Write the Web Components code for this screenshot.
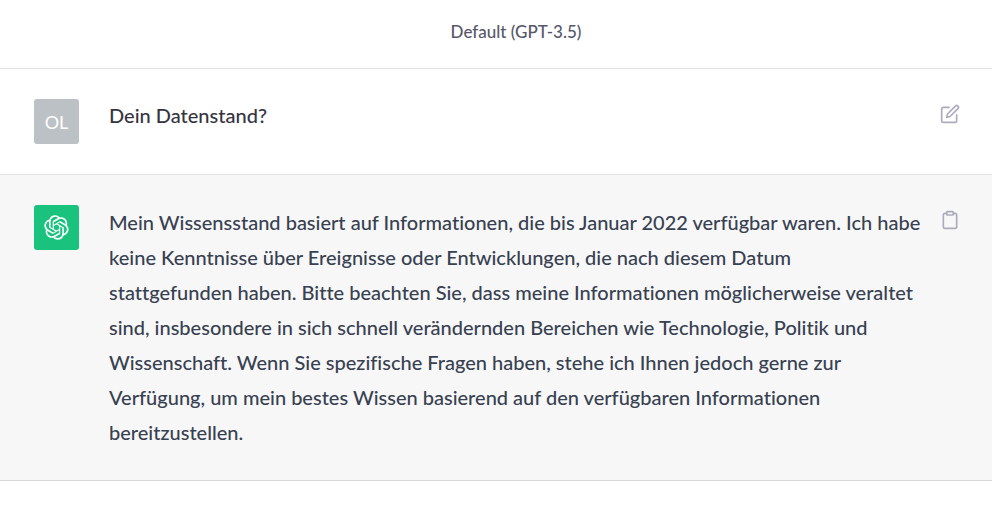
<!DOCTYPE html>
<html lang="de">
<head>
<meta charset="utf-8">
<meta name="viewport" content="width=device-width, initial-scale=1">
<title>Default (GPT-3.5)</title>
<style>
body{margin:0;background:#fff;font-family:Lato,Roboto,sans-serif;font-variant-ligatures:none}
</style>
</head>
<body>
<chat-thread>
  <thread-header>Default (GPT-3.5)</thread-header>
  <chat-message role="article" kind="user">
    <user-avatar slot="avatar">OL</user-avatar>
    Dein Datenstand?
    <icon-action slot="action" icon="edit" label="Bearbeiten"></icon-action>
  </chat-message>
  <chat-message role="article" kind="assistant">
    <user-avatar slot="avatar" bot></user-avatar>
    Mein Wissensstand basiert auf Informationen, die bis Januar 2022 verfügbar waren. Ich habe keine Kenntnisse über Ereignisse oder Entwicklungen, die nach diesem Datum<br> stattgefunden haben. Bitte beachten Sie, dass meine Informationen möglicherweise veraltet sind, insbesondere in sich schnell verändernden Bereichen wie Technologie, Politik und Wissenschaft. Wenn Sie spezifische Fragen haben, stehe ich Ihnen jedoch gerne zur Verfügung, um mein bestes Wissen basierend auf den verfügbaren Informationen bereitzustellen.
    <icon-action slot="action" icon="clipboard" label="Kopieren"></icon-action>
  </chat-message>
</chat-thread>
<script>
const define = (name, html, setup) => customElements.define(name, class extends HTMLElement {
  constructor() {
    super();
    this.attachShadow({ mode: 'open' }).innerHTML = html;
  }
  connectedCallback() { if (setup) setup(this, this.shadowRoot); }
});

define('chat-thread', `<style>:host{display:flex;flex-direction:column}</style><slot></slot>`);

define('thread-header', `<style>
:host{display:block;border-bottom:1px solid #e2e2e2;padding:20px 0 24px 40px;text-align:center;color:#565869}
h1{margin:0;font-size:17px;line-height:24px;font-weight:500}
</style><h1><slot></slot></h1>`);

define('chat-message', `<style>
:host{display:grid;grid-template-columns:45px minmax(0,1fr) 20px;column-gap:30px;padding:30px 32px 30px 34px;border-bottom:1px solid #e2e2e2;color:#343541}
:host([kind=assistant]){background:#f7f7f7;color:#374151;border-color:#d9d9d9}
p{margin:0 -20px 0 0;font-size:20px;line-height:32px;font-weight:500}
:host([kind=assistant]) p{line-height:35px}
</style><slot name="avatar"></slot><p><slot></slot></p><slot name="action"></slot>`);

define('user-avatar', `<style>
:host{display:flex;align-items:center;justify-content:center;width:45px;height:45px;border-radius:3px;background:#bcc1c5;color:#fff;font-size:18px;line-height:24px;font-weight:400}
:host([bot]){background:#19c37d}
svg{display:none;width:25px;height:25px;fill:#fff}
:host([bot]) svg{display:block}
</style><slot></slot><svg viewBox="0 0 41 41" aria-hidden="true"><path d="M37.532 16.87a9.963 9.963 0 0 0-.856-8.184 10.078 10.078 0 0 0-10.855-4.835A9.964 9.964 0 0 0 18.306.5a10.079 10.079 0 0 0-9.614 6.977 9.967 9.967 0 0 0-6.664 4.834 10.08 10.08 0 0 0 1.24 11.817 9.965 9.965 0 0 0 .856 8.185 10.079 10.079 0 0 0 10.855 4.835 9.965 9.965 0 0 0 7.516 3.35 10.078 10.078 0 0 0 9.617-6.981 9.967 9.967 0 0 0 6.663-4.834 10.079 10.079 0 0 0-1.243-11.813zM22.498 37.886a7.474 7.474 0 0 1-4.799-1.735c.061-.033.168-.091.237-.134l7.964-4.6a1.294 1.294 0 0 0 .655-1.134V19.054l3.366 1.944a.12.12 0 0 1 .066.092v9.299a7.505 7.505 0 0 1-7.49 7.496zM6.392 31.006a7.471 7.471 0 0 1-.894-5.023c.06.036.162.099.237.141l7.964 4.6a1.297 1.297 0 0 0 1.308 0l9.724-5.614v3.888a.12.12 0 0 1-.048.103l-8.051 4.649a7.504 7.504 0 0 1-10.24-2.744zM4.297 13.62A7.469 7.469 0 0 1 8.2 10.333c0 .068-.004.19-.004.274v9.201a1.294 1.294 0 0 0 .654 1.132l9.723 5.614-3.366 1.944a.12.12 0 0 1-.114.01L7.04 23.856a7.504 7.504 0 0 1-2.743-10.237zm27.658 6.437l-9.724-5.615 3.367-1.943a.121.121 0 0 1 .113-.01l8.052 4.648a7.498 7.498 0 0 1-1.158 13.528v-9.476a1.293 1.293 0 0 0-.65-1.132zm3.35-5.043c-.059-.037-.162-.099-.236-.141l-7.965-4.6a1.298 1.298 0 0 0-1.308 0l-9.723 5.614v-3.888a.12.12 0 0 1 .048-.103l8.05-4.645a7.497 7.497 0 0 1 11.135 7.763zm-21.063 6.929l-3.367-1.944a.12.12 0 0 1-.065-.092v-9.299a7.497 7.497 0 0 1 12.293-5.756 6.94 6.94 0 0 0-.236.134l-7.965 4.6a1.294 1.294 0 0 0-.654 1.132l-.006 11.225zm1.829-3.943l4.33-2.501 4.332 2.5v5l-4.331 2.5-4.331-2.5V18z"/></svg>`);

const icons = {
  edit: '<path d="M11 4H4a2 2 0 0 0-2 2v14a2 2 0 0 0 2 2h14a2 2 0 0 0 2-2v-7"/><path d="M18.5 2.5a2.121 2.121 0 0 1 3 3L12 15l-4 1 1-4 9.5-9.5z"/>',
  clipboard: '<path d="M16 4h2a2 2 0 0 1 2 2v14a2 2 0 0 1-2 2H6a2 2 0 0 1-2-2V6a2 2 0 0 1 2-2h2"/><rect x="8" y="2" width="8" height="4" rx="1" ry="1"/>'
};
define('icon-action', `<style>
:host{display:block;padding-top:5px}
button{display:block;margin:0;padding:0;border:0;background:none;color:#acacbe;cursor:pointer}
svg{display:block;width:20px;height:20px;fill:none;stroke:currentColor;stroke-width:2;stroke-linecap:round;stroke-linejoin:round}
</style><button type="button"><svg viewBox="0 0 24 24" aria-hidden="true"></svg></button>`, (host, root) => {
  root.querySelector('button').setAttribute('aria-label', host.getAttribute('label'));
  root.querySelector('svg').innerHTML = icons[host.getAttribute('icon')];
});
</script>
</body>
</html>
